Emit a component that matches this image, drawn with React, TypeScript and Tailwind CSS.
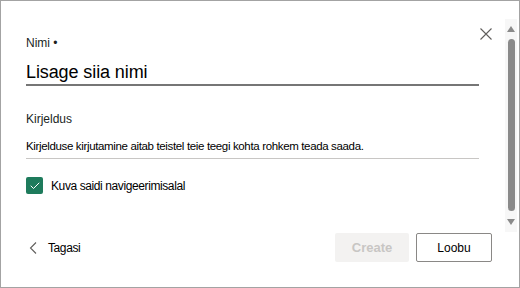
import { Check } from 'lucide-react';

function Scrollbar() {
  return (
    <div className="mt-[18px] mb-[55px] flex w-[12px] flex-col items-center bg-[#f7f7f7] pt-[7px] pb-[7px]">
      <svg width="8" height="6" viewBox="0 0 8 6" className="shrink-0">
        <path d="M4 0 L8 6 L0 6 Z" fill="#8a8a8a" />
      </svg>
      <div className="mt-[7px] w-[7px] flex-1 rounded-full bg-[#8a8a8a]" />
      <svg width="8" height="6" viewBox="0 0 8 6" className="mt-[8px] shrink-0">
        <path d="M0 0 L8 0 L4 6 Z" fill="#8a8a8a" />
      </svg>
    </div>
  );
}

export default function App() {
  return (
    <div
      className="relative flex h-[288px] w-[520px] border border-[#a3a3a3] bg-white text-[#201f1e]"
      style={{ fontFamily: '"Segoe UI", "Liberation Sans", Arial, sans-serif' }}
    >
      {/* close button sits over the header */}
      <button className="absolute left-[478px] top-[26px] flex h-[13px] w-[13px] items-center justify-center">
        <svg width="12" height="12" viewBox="0 0 12 12">
          <path d="M0.5 0.5 L11.5 11.5 M11.5 0.5 L0.5 11.5" stroke="#605e5c" strokeWidth="1.1" />
        </svg>
      </button>

      <div className="flex flex-1 flex-col pl-[25px] pr-[26px] pt-[35px]">
        <label className="text-[12px] leading-[14px]">Nimi •</label>
        <div className="mt-[11px] border-b-2 border-[#767676] pb-[1px] text-[18px] leading-[22px] tracking-[-0.1px] text-black">
          Lisage siia nimi
        </div>

        <label className="mt-[26px] text-[12px] leading-[14px]">Kirjeldus</label>
        <div className="mt-[13px] border-b border-[#c8c6c4] pb-[5px] text-[11.5px] leading-[14px] tracking-[-0.35px] text-black">
          Kirjelduse kirjutamine aitab teistel teie teegi kohta rohkem teada saada.
        </div>

        <div className="mt-[18px] flex items-center gap-[8px]">
          <span className="flex h-[17px] w-[17px] items-center justify-center rounded-[2px] bg-[#1e7b5c] text-white">
            <Check size={12} strokeWidth={2} />
          </span>
          <span className="text-[12px] leading-[14px] tracking-[-0.4px] text-black">
            Kuva saidi navigeerimisalal
          </span>
        </div>

        <div className="mt-auto mb-[25px] flex items-center">
          <button className="ml-[3px] flex items-center gap-[11px] text-[12px] tracking-[-0.4px] text-black">
            <svg width="8" height="12" viewBox="0 0 8 12">
              <path d="M7 0.5 L1.5 6 L7 11.5" fill="none" stroke="#605e5c" strokeWidth="1.1" />
            </svg>
            Tagasi
          </button>
          <div className="ml-auto -mr-[13px] flex gap-[7px]">
            <button className="h-[29px] w-[74px] rounded-[2px] bg-[#f3f2f1] text-[13px] font-semibold text-[#c8c6c4]">
              Create
            </button>
            <button className="h-[29px] w-[76px] rounded-[2px] border border-[#8a8886] bg-white text-[12px] text-black">
              Loobu
            </button>
          </div>
        </div>
      </div>

      <Scrollbar />
      <div className="w-[2px]" />
    </div>
  );
}
